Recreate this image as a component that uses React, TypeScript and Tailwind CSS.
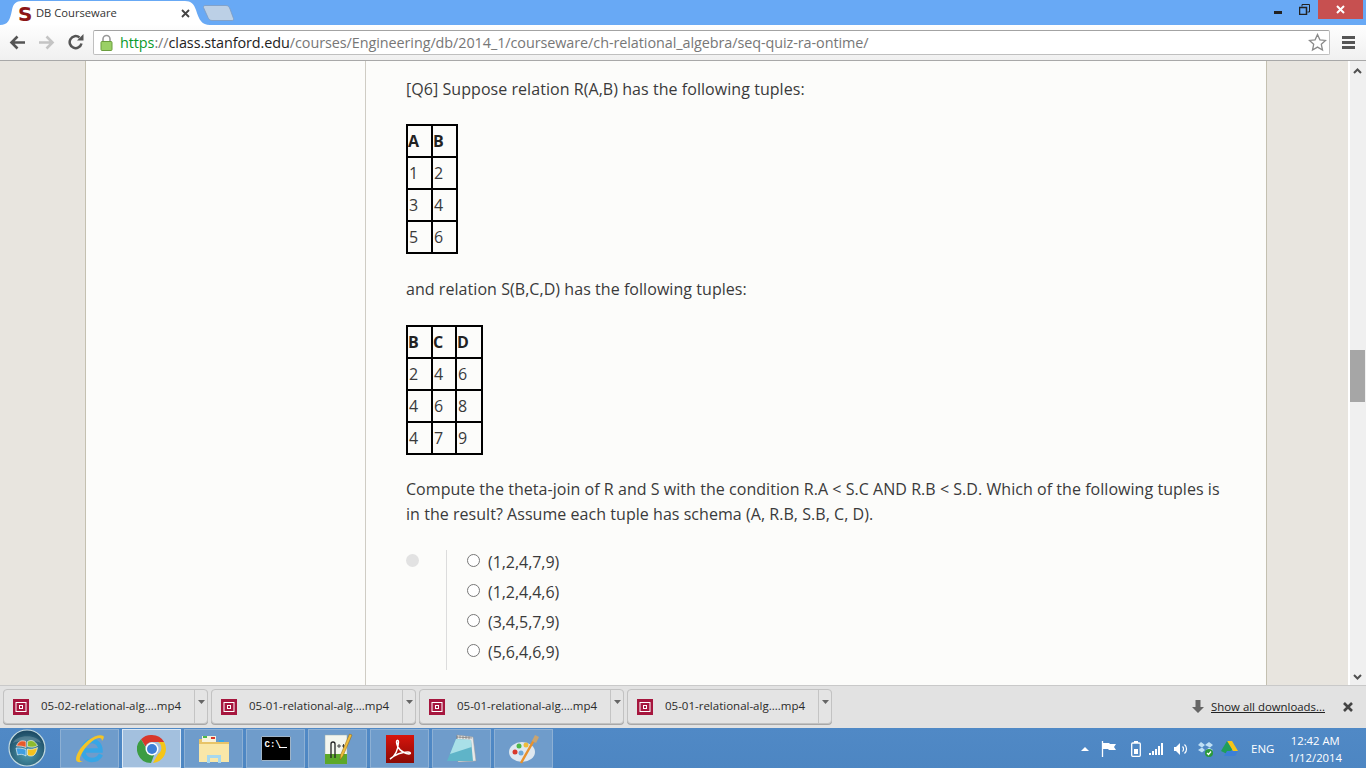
import React from "react";

const font = { fontFamily: '"Open Sans", sans-serif' };

function RelTable({ rows, widths }: { rows: string[][]; widths: string[] }) {
  return (
    <table className="border-collapse border-2 border-black text-[16px] leading-[22px] text-[#3a3a3a]">
      <tbody>
        {rows.map((r, i) => (
          <tr key={i} className="h-[32px]">
            {r.map((c, j) => (
              <td
                key={j}
                className={`border-2 border-black p-0 align-middle ${widths[j]} ${i === 0 ? "font-bold text-[#222]" : "pl-px"}`}
              >
                {c}
              </td>
            ))}
          </tr>
        ))}
      </tbody>
    </table>
  );
}

function Radio({ label }: { label: string }) {
  return (
    <div className="flex h-[30px] items-start">
      <span className="mt-[4px] h-[13px] w-[13px] rounded-full border border-[#777] bg-white" />
      <span className="ml-[8px] text-[16px] leading-[24px] tracking-[-0.05px] text-[#3a3a3a]">{label}</span>
    </div>
  );
}

function DownloadItem({ name, width }: { name: string; width: string }) {
  return (
    <div className={`flex h-[35px] ${width} rounded-[4px] border border-[#c2c2c2] bg-[#e4e4e4] shadow-[0_1px_0_#a8a8a8]`}>
      <div className="flex flex-1 items-center pl-[9px]">
        <svg width="16" height="16" viewBox="0 0 16 16">
          <rect width="16" height="16" fill="#a6163e" />
          <rect x="3" y="3.5" width="10" height="9" fill="none" stroke="#fff" strokeWidth="1" />
          <rect x="6.5" y="6.5" width="3" height="3" fill="none" stroke="#fff" strokeWidth="1" />
        </svg>
        <span className="mb-[2px] ml-[12px] text-[11.5px] text-[#2a2a2a]">{name}</span>
      </div>
      <div className="flex w-[13px] justify-center border-l border-[#c4c4c4] pt-[10px]">
        <svg width="7" height="4" viewBox="0 0 7 4"><path d="M0 0h7L3.5 4z" fill="#666" /></svg>
      </div>
    </div>
  );
}

function TaskButton({ children, active }: { children: React.ReactNode; active?: boolean }) {
  return (
    <div
      className={`flex h-[39px] w-[59px] items-center justify-center border ${
        active ? "border-[#dbe8f5] bg-[#a3c0de]" : "border-[#8db0d4] bg-[#6f9ccb]"
      }`}
    >
      {children}
    </div>
  );
}

export default function App() {
  return (
    <div className="flex h-[768px] w-[1366px] flex-col overflow-hidden bg-white" style={font}>
      {/* Title bar */}
      <div className="relative flex h-[25px] shrink-0 items-end bg-[#68a9f5] pl-[5px]">
        <div className="relative h-[25px] w-[200px]">
          <svg className="absolute inset-0 overflow-visible" width="200" height="25" viewBox="0 0 200 25">
            <path d="M-5 25C3 25 5 20 7 10 8 4 11 1 17 1H180C186 1 189 4 191 10 194 20 197 25 205 25Z" fill="#fff" />
          </svg>
          <div className="relative flex h-full items-center pl-[13px] pt-[2px]">
            <span className="w-[11px] text-center text-[20px] font-bold leading-none text-[#8c1515]" style={{ fontFamily: '"DejaVu Sans", sans-serif' }}>S</span>
            <span className="ml-[7px] text-[11.2px] text-[#333]">DB Courseware</span>
            <svg className="absolute left-[176px] top-[9px]" width="9" height="9" viewBox="0 0 9 9">
              <path d="M1 1l7 7M8 1L1 8" stroke="#444" strokeWidth="1.8" />
            </svg>
          </div>
        </div>
        <svg className="mb-[4px] ml-[-2px]" width="31" height="16" viewBox="0 0 31 16">
          <path d="M2 .5H23C25 .5 26 1.500 27 4L30.500 13.500C31 15 30 15.500 29 15.500H9C7 15.500 6 14.500 5 12.500L.5 2.500C.2 1.500 1 .5 2 .5Z" fill="#bcd0e6" stroke="#7d9cc0" strokeWidth="0.8" />
        </svg>
        {/* window controls */}
        <div className="absolute right-[3px] top-0 flex h-[19px] items-stretch">
          <div className="flex w-[26px] items-center justify-center">
            <div className="mt-[6px] h-[3px] w-[8px] bg-[#222]" />
          </div>
          <div className="flex w-[26px] items-center justify-center">
            <svg width="11" height="11" viewBox="0 0 11 11" fill="none" stroke="#222">
              <rect x="0.5" y="3.5" width="7" height="7" strokeWidth="1.5" />
              <path d="M3 2.500V.5h7.500V8H8.500" />
            </svg>
          </div>
          <div className="ml-px flex w-[45px] items-center justify-center bg-[#c75050]">
            <svg width="9" height="9" viewBox="0 0 9 9"><path d="M1 1l7 7M8 1L1 8" stroke="#fff" strokeWidth="2" /></svg>
          </div>
        </div>
      </div>

      {/* Toolbar */}
      <div className="flex h-[36px] shrink-0 items-center border-b border-[#a8a8a8] bg-[linear-gradient(#fefefe,#f0f0f0)] pb-[1px]">
        <svg className="ml-[9px]" width="17" height="15" viewBox="0 0 17 15" fill="none" stroke="#555" strokeWidth="2.6">
          <path d="M16 7.500H3M8.500 1.500L2.500 7.500l6 6" />
        </svg>
        <svg className="ml-[12px]" width="17" height="15" viewBox="0 0 17 15" fill="none" stroke="#c4c4c4" strokeWidth="2.6">
          <path d="M1 7.500H14M8.500 1.500L14.500 7.500l-6 6" />
        </svg>
        <svg className="ml-[13px]" width="16" height="16" viewBox="0 0 16 16" fill="none">
          <path d="M13.500 9.500A6 6 0 1 1 11.500 3.500" stroke="#555" strokeWidth="2.5" />
          <path d="M9 6.500h6.500V0z" fill="#555" />
        </svg>
        <div className="ml-[9px] flex h-[25px] w-[1237px] items-center rounded-[2px] border border-[#bfbfbf] border-t-[#a3a3a3] bg-white">
          <svg className="ml-[6px]" width="13" height="17" viewBox="0 0 13 17">
            <path d="M3 8V5a3.500 3.500 0 0 1 7 0v3" fill="none" stroke="#999" strokeWidth="1.6" />
            <rect x="1" y="7.500" width="11" height="9" rx="1" fill="#9ad066" stroke="#6b9e3e" />
          </svg>
          <div className="ml-[7px] mt-px whitespace-nowrap text-[14.4px] tracking-[-0.07px]">
            <span className="text-[#0a9a2b]">https</span>
            <span className="text-[#777]">://</span>
            <span className="text-[#222]">class.stanford.edu</span>
            <span className="text-[#777]">/courses/Engineering/db/2014_1/courseware/ch-relational_algebra/seq-quiz-ra-ontime/</span>
          </div>
          <svg className="ml-auto mr-[2px]" width="19" height="19" viewBox="0 0 19 19">
            <path d="M9.500 1.500l2.400 5.300 5.600.6-4.200 3.900 1.200 5.700-5-2.900-5 2.900 1.200-5.700L1.500 7.400l5.600-.6z" fill="#fff" stroke="#8a8a8a" strokeWidth="1.3" />
          </svg>
        </div>
        <div className="ml-[12px] flex w-[13px] flex-col gap-[2px]">
          <div className="h-[3px] bg-[#555]" />
          <div className="h-[3px] bg-[#555]" />
          <div className="h-[3px] bg-[#555]" />
        </div>
      </div>

      {/* Page */}
      <div className="flex min-h-0 flex-1 bg-[#e8e5df]">
        <div className="w-[85px] shrink-0" />
        <div className="flex w-[1182px] shrink-0 border-x border-[#c4c0b0] bg-[#fcfcfa]">
          <div className="w-[280px] shrink-0 border-r border-[#cfccc4]" />
          <div className="w-[860px] pl-[40px] pt-[16px] text-[16px] leading-[25px] text-[#3a3a3a]">
            <p className="tracking-[0.055px]">[Q6] Suppose relation R(A,B) has the following tuples:</p>
            <div className="mt-[22px] w-[52px]">
              <RelTable
                widths={["w-[25px]", "w-[25px]"]}
                rows={[["A", "B"], ["1", "2"], ["3", "4"], ["5", "6"]]}
              />
            </div>
            <p className="mt-[23px] tracking-[0.055px]">and relation S(B,C,D) has the following tuples:</p>
            <div className="mt-[23px] w-[77px]">
              <RelTable
                widths={["w-[25px]", "w-[24px]", "w-[26px]"]}
                rows={[["B", "C", "D"], ["2", "4", "6"], ["4", "6", "8"], ["4", "7", "9"]]}
              />
            </div>
            <p className="mt-[22px] w-[820px] tracking-[0.045px]">
              Compute the theta-join of R and S with the condition R.A &lt; S.C AND R.B &lt; S.D. Which of the following tuples is in the result? Assume each tuple has schema (A, R.B, S.B, C, D).
            </p>
            <div className="mt-[23px] flex">
              <div className="mt-[4px] h-[13px] w-[13px] rounded-full bg-[#e2e2e2]" />
              <div className="ml-[27px] h-[120px] border-l border-[#dcdcdc] pl-[20px]">
                <Radio label="(1,2,4,7,9)" />
                <Radio label="(1,2,4,4,6)" />
                <Radio label="(3,4,5,7,9)" />
                <Radio label="(5,6,4,6,9)" />
              </div>
            </div>
          </div>
        </div>
        <div className="w-[81px] shrink-0" />
        <div className="flex w-[18px] shrink-0 flex-col items-center border-l-2 border-white bg-[#f0f0f0] pr-px">
          <svg className="mt-[7px]" width="9" height="6" viewBox="0 0 9 6" fill="none" stroke="#505050" strokeWidth="2"><path d="M1 5l3.500-3.500L8 5" /></svg>
          <div className="mt-[276px] h-[52px] w-[15px] bg-[#a6a6a6]" />
          <svg className="mb-[5px] mt-auto" width="9" height="6" viewBox="0 0 9 6" fill="none" stroke="#505050" strokeWidth="2"><path d="M1 1l3.500 3.500L8 1" /></svg>
        </div>
      </div>

      {/* Downloads */}
      <div className="flex h-[43px] shrink-0 items-start gap-[3px] border-t border-[#c9c9c9] bg-[#e2e2e2] pl-[3px] pt-[3px]">
        <DownloadItem width="w-[205px]" name="05-02-relational-alg....mp4" />
        <DownloadItem width="w-[205px]" name="05-01-relational-alg....mp4" />
        <DownloadItem width="w-[205px]" name="05-01-relational-alg....mp4" />
        <DownloadItem width="w-[205px]" name="05-01-relational-alg....mp4" />
        <div className="ml-auto flex h-[35px] items-center pr-[13px]">
          <svg width="12" height="14" viewBox="0 0 12 14"><path d="M3.500 0h5v7H12L6 13 0 7h3.500z" fill="#666" /></svg>
          <span className="ml-[7px] text-[11.4px] text-[#222] underline">Show all downloads...</span>
          <svg className="ml-[18px]" width="10" height="10" viewBox="0 0 10 10"><path d="M1 1l8 8M9 1L1 9" stroke="#444" strokeWidth="2.6" /></svg>
        </div>
      </div>

      {/* Taskbar */}
      <div className="relative flex h-[40px] shrink-0 items-start gap-[3px] bg-[linear-gradient(#5089c6,#4d86c2)] pl-[60px] pt-px text-white">
        <svg className="absolute left-[8px] top-px" width="38" height="38" viewBox="0 0 38 38">
          <defs>
            <radialGradient id="orb" cx="50%" cy="65%" r="60%">
              <stop offset="0" stopColor="#4f9fb0" />
              <stop offset="1" stopColor="#1e4c66" />
            </radialGradient>
          </defs>
          <circle cx="19" cy="19" r="18" fill="url(#orb)" stroke="#c3dadf" strokeWidth="1.2" />
          <path d="M8.500 17c2-5 5-6 9.500-4.500v6C15 17 11.500 17 8.500 17z" fill="#e8592a" stroke="#fff" strokeWidth="0.6" />
          <path d="M19.500 12.500c4-2 7-1 10 4-3 2-6 2-10 1z" fill="#8dbb2f" stroke="#fff" strokeWidth="0.6" />
          <path d="M8 19c3 0 6.500 0 10 1.500v6.500c-3-2-6-2-8.500-1z" fill="#3f9ee0" stroke="#fff" strokeWidth="0.6" />
          <path d="M19.500 20c3 1 7 0 10-1.500-1 5-3 8.500-6 8.500-1 0-3 0-4-1z" fill="#f4c21e" stroke="#fff" strokeWidth="0.6" />
          <path d="M5 14c3-9 25-9 28 0-6-3-22-3-28 0z" fill="#fff" opacity="0.18" />
        </svg>
        <TaskButton>
          <svg width="32" height="32" viewBox="0 0 32 32">
            <path d="M27 21.500C25 25.500 21.500 27 18 27 12.500 27 9 23 9 17.500S13 8 18 8s8.500 4 8.500 9.500H10" fill="none" stroke="#37a6e6" strokeWidth="4.4" />
            <path d="M29.500 3C23 0 10 8 3.500 20.500 0 28 3 31 10 28 6 29 5 27 6.500 23 11 13 20 5.500 25 5c2-.2 3 .8 3 3 1.500-2 2.300-3.800 1.500-5z" fill="#f3c428" />
          </svg>
        </TaskButton>
        <TaskButton active>
          <svg width="30" height="30" viewBox="0 0 30 30">
            <path d="M15 1a14 14 0 0 1 12.100 7H15a7 7 0 0 0-6.500 4.500L4 5.200A14 14 0 0 1 15 1z" fill="#d8372b" />
            <path d="M27.100 8A14 14 0 0 1 16 29l5-9a7 7 0 0 0 0-12z" fill="#f5c518" />
            <path d="M4 5.200l5.500 9.500a7 7 0 0 0 8 5.300L14 29A14 14 0 0 1 4 5.200z" fill="#3c9c42" />
            <circle cx="15" cy="15" r="6.5" fill="#fff" />
            <circle cx="15" cy="15" r="5" fill="#3c7fd8" />
          </svg>
        </TaskButton>
        <TaskButton>
          <svg width="32" height="30" viewBox="0 0 32 30">
            <path d="M1 5h12l2 3h16v20H1z" fill="#e8c468" />
            <rect x="4" y="2" width="14" height="6" fill="#f7f2dc" />
            <rect x="5" y="2" width="4" height="2" fill="#4cb848" />
            <rect x="13" y="3" width="4" height="2" fill="#d8372b" />
            <rect x="21" y="6" width="5" height="2" fill="#3aa8e8" />
            <path d="M1 10h30v18H1z" fill="#f9e7a8" />
            <path d="M9 29v-8h14v8h-3v-5h-8v5z" fill="#a6d8ee" />
          </svg>
        </TaskButton>
        <TaskButton>
          <div className="relative h-[25px] w-[30px] rounded-[1px] border border-[#9fb4c8] bg-black pl-[3px] pt-[3px] text-[9px] font-bold leading-[10px] text-white" style={{ fontFamily: '"Liberation Mono", monospace' }}>
            C:\
            <div className="absolute left-[17px] top-[10px] h-px w-[8px] bg-white" />
          </div>
        </TaskButton>
        <TaskButton>
          <svg width="32" height="32" viewBox="0 0 32 32">
            <rect x="3" y="2" width="22" height="29" fill="#f4f6ee" stroke="#9aa" strokeWidth="0.5" />
            <path d="M3 21h22v10H3z" fill="#5ca829" />
            <path d="M9 25V11q0-2 2-2t2 2v14" fill="none" stroke="#222" strokeWidth="1.3" />
            <path d="M15 13h4M17 11v4M20 13h3M21.500 11v4" stroke="#222" strokeWidth="0.8" />
            <path d="M30 2l-9 21-3 4 .5-5 9-21z" fill="#eebc3c" stroke="#8a6512" strokeWidth="0.5" />
          </svg>
        </TaskButton>
        <TaskButton>
          <svg width="30" height="30" viewBox="0 0 30 30">
            <defs>
              <linearGradient id="pdf" x1="0" y1="0" x2="0" y2="1">
                <stop offset="0" stopColor="#d8140c" />
                <stop offset="1" stopColor="#8a0a05" />
              </linearGradient>
            </defs>
            <rect x="1" y="1" width="28" height="28" fill="url(#pdf)" />
            <path d="M5 25c5-2.500 8-9 8.500-17 0-2.500-2-2.500-2 0 .5 6 5 11 12.500 12 2 0 2-2-1-2-6 0-12 2-18 7z" fill="none" stroke="#fff" strokeWidth="1.5" />
          </svg>
        </TaskButton>
        <TaskButton>
          <svg width="32" height="30" viewBox="0 0 32 30">
            <path d="M11 1l16 2 3 24-18 1z" fill="#e8e8e8" stroke="#999" strokeWidth="0.5" />
            <path d="M11 3l15 1M11 1.500v3M14 1.500v3M17 2v3M20 2v3M23 2.500v3" stroke="#777" strokeWidth="0.7" />
            <path d="M10 5l15 1 2 21H1z" fill="#5fb4c8" />
            <path d="M10 5l15 1 .5 7L4 20z" fill="#a9e0e8" />
          </svg>
        </TaskButton>
        <TaskButton>
          <svg width="32" height="32" viewBox="0 0 32 32">
            <ellipse cx="14" cy="19" rx="13" ry="10" fill="#dfe8f0" />
            <circle cx="7" cy="19" r="2.5" fill="#d8372b" />
            <circle cx="11" cy="13" r="2.5" fill="#4cb848" />
            <circle cx="18" cy="12" r="2.5" fill="#eebc3c" />
            <circle cx="13" cy="20" r="2.5" fill="#6da8d8" />
            <path d="M13 30L26 7" stroke="#e8912c" strokeWidth="2.5" />
            <path d="M24 8l3-6 4 2-3 6z" fill="#c9a470" />
          </svg>
        </TaskButton>
        {/* Tray */}
        <div className="ml-auto flex h-[39px] items-center pr-[24px]">
          <svg width="8" height="4" viewBox="0 0 8 4"><path d="M0 4L4 0l4 4z" fill="#fff" /></svg>
          <svg className="ml-[12px]" width="16" height="16" viewBox="0 0 16 16">
            <path d="M1.500 0v16" stroke="#fff" strokeWidth="1.3" />
            <path d="M2 2h6l1 1h6l-2 3 2 3H8L7 8H2z" fill="#fff" />
          </svg>
          <svg className="ml-[14px]" width="10" height="16" viewBox="0 0 10 16" fill="none">
            <rect x="0.7" y="2" width="8.6" height="13.3" rx="1" stroke="#fff" strokeWidth="1.3" />
            <rect x="3" y="0" width="4" height="2" fill="#fff" />
            <rect x="3" y="8" width="4" height="5" fill="#fff" />
          </svg>
          <svg className="ml-[8px]" width="16" height="12" viewBox="0 0 16 12" fill="#fff">
            <rect x="0" y="10" width="2" height="2" /><rect x="3" y="8" width="2" height="4" /><rect x="6" y="6" width="2" height="6" /><rect x="9" y="3" width="2" height="9" /><rect x="12" y="0" width="2" height="12" />
          </svg>
          <svg className="ml-[8px]" width="16" height="14" viewBox="0 0 16 14" fill="none">
            <path d="M1 5h2l4-4v12L3 9H1z" fill="#fff" />
            <path d="M9.500 4.500a3.500 3.500 0 0 1 0 5M11.500 2.500a6 6 0 0 1 0 9" stroke="#fff" strokeWidth="1.2" />
          </svg>
          <svg className="ml-[8px]" width="17" height="16" viewBox="0 0 17 16">
            <path d="M4 1l4 3-3 2.500L1 4zM12 1l4 3-3 2.500L8 4zM5 6.500l3 2.500-3 2.500-4-2.500zM12 6.500l4 2.500-3 2.500-4-2.500z" fill="#bfe0f5" />
            <circle cx="12" cy="12" r="4" fill="#2a9a3a" />
            <path d="M10 12l1.500 1.500 2.500-3" stroke="#fff" strokeWidth="1.2" fill="none" />
          </svg>
          <svg className="ml-[7px]" width="17" height="15" viewBox="0 0 17 15">
            <path d="M6 0h5l6 10h-5z" fill="#f5c518" />
            <path d="M6 0l5 8.500L8 14 0 10z" fill="#1f9e5a" />
            <path d="M3 15l3-5h11l-3 5z" fill="#3c7fd8" />
          </svg>
          <span className="ml-[13px] text-[11.5px]">ENG</span>
          <div className="ml-[14px] flex flex-col items-center text-[11.3px] leading-[17px]">
            <span>12:42 AM</span>
            <span>1/12/2014</span>
          </div>
        </div>
      </div>
    </div>
  );
}
